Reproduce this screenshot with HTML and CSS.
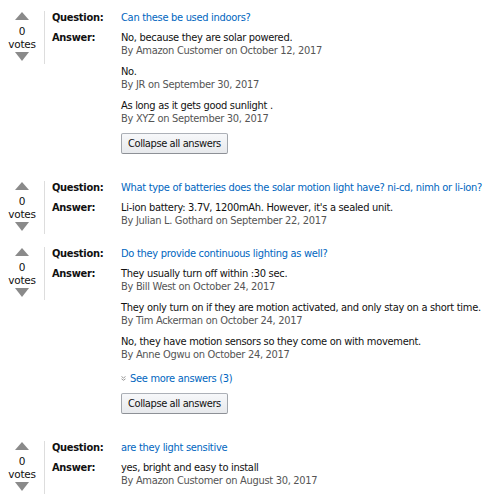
FILE: index.html
```html
<!DOCTYPE html>
<html lang="en">
<head>
    <meta charset="UTF-8">
    <meta name="viewport" content="width=device-width, initial-scale=1.0">
    <title>Customer Questions &amp; Answers</title>
    <link rel="stylesheet" href="styles.css">
</head>
<body>
    <div class="qa-list">
        <!-- Question 1 -->
        <div class="qa">
            <div class="vote">
                <span class="arrow up"></span>
                <span class="count first">0</span>
                <span class="count">votes</span>
                <span class="arrow down"></span>
            </div>
            <div class="qa-body">
                <div class="row">
                    <span class="label">Question:</span>
                    <a class="question" href="#">Can these be used indoors?</a>
                </div>
                <div class="row answers">
                    <span class="label">Answer:</span>
                    <div class="answer-list">
                        <div class="answer">
                            <p>No, because they are solar powered.</p>
                            <p class="byline">By Amazon Customer on October 12, 2017</p>
                        </div>
                        <div class="answer">
                            <p>No.</p>
                            <p class="byline">By JR on September 30, 2017</p>
                        </div>
                        <div class="answer">
                            <p>As long as it gets good sunlight .</p>
                            <p class="byline">By XYZ on September 30, 2017</p>
                        </div>
                        <button class="collapse">Collapse all answers</button>
                    </div>
                </div>
            </div>
        </div>

        <!-- Question 2 -->
        <div class="qa">
            <div class="vote">
                <span class="arrow up"></span>
                <span class="count first">0</span>
                <span class="count">votes</span>
                <span class="arrow down"></span>
            </div>
            <div class="qa-body">
                <div class="row">
                    <span class="label">Question:</span>
                    <a class="question" href="#">What type of batteries does the solar motion light have? ni-cd, nimh or li-ion?</a>
                </div>
                <div class="row answers">
                    <span class="label">Answer:</span>
                    <div class="answer-list">
                        <div class="answer">
                            <p>Li-ion battery: 3.7V, 1200mAh. However, it's a sealed unit.</p>
                            <p class="byline">By Julian L. Gothard on September 22, 2017</p>
                        </div>
                    </div>
                </div>
            </div>
        </div>

        <!-- Question 3 -->
        <div class="qa">
            <div class="vote">
                <span class="arrow up"></span>
                <span class="count first">0</span>
                <span class="count">votes</span>
                <span class="arrow down"></span>
            </div>
            <div class="qa-body">
                <div class="row">
                    <span class="label">Question:</span>
                    <a class="question" href="#">Do they provide continuous lighting as well?</a>
                </div>
                <div class="row answers">
                    <span class="label">Answer:</span>
                    <div class="answer-list">
                        <div class="answer">
                            <p>They usually turn off within :30 sec.</p>
                            <p class="byline">By Bill West on October 24, 2017</p>
                        </div>
                        <div class="answer">
                            <p>They only turn on if they are motion activated, and only stay on a short time.</p>
                            <p class="byline">By Tim Ackerman on October 24, 2017</p>
                        </div>
                        <div class="answer">
                            <p>No, they have motion sensors so they come on with movement.</p>
                            <p class="byline">By Anne Ogwu on October 24, 2017</p>
                        </div>
                        <a class="see-more" href="#"><svg class="chevron" width="5" height="5" viewBox="0 0 5 5"><path d="M0.5 0.5 L2.5 2 L4.5 0.5 M0.5 2.8 L2.5 4.3 L4.5 2.8" fill="none" stroke="#999" stroke-width="1"/></svg>See more answers (3)</a>
                        <button class="collapse">Collapse all answers</button>
                    </div>
                </div>
            </div>
        </div>

        <!-- Question 4 -->
        <div class="qa">
            <div class="vote">
                <span class="arrow up"></span>
                <span class="count first">0</span>
                <span class="count">votes</span>
                <span class="arrow down"></span>
            </div>
            <div class="qa-body">
                <div class="row">
                    <span class="label">Question:</span>
                    <a class="question" href="#">are they light sensitive</a>
                </div>
                <div class="row answers">
                    <span class="label">Answer:</span>
                    <div class="answer-list">
                        <div class="answer">
                            <p>yes, bright and easy to install</p>
                            <p class="byline">By Amazon Customer on August 30, 2017</p>
                        </div>
                    </div>
                </div>
            </div>
        </div>
    </div>
</body>
</html>
```

FILE: styles.css
```css
/* General Styles */
body {
    font-family: "DejaVu Sans Condensed", "DejaVu Sans", sans-serif;
    font-size: 11px;
    line-height: 13px;
    letter-spacing: -0.3px;
    color: #111;
    background: #fff;
    margin: 0;
    padding: 11px 0 0 0;
}

p {
    margin: 0;
}

a {
    color: #0066c0;
    text-decoration: none;
}

/* Question block */
.qa {
    display: flex;
    align-items: flex-start;
    margin-bottom: 27px;
}

.qa:nth-child(2) {
    margin-bottom: 13px;
}

.vote {
    width: 44px;
    height: 53px;
    border-right: 1px solid #ddd;
    display: flex;
    flex-direction: column;
    align-items: center;
    flex-shrink: 0;
}

.arrow {
    width: 0;
    height: 0;
    border-left: 7px solid transparent;
    border-right: 7px solid transparent;
}

.arrow.up {
    margin-top: 1px;
    border-bottom: 8px solid #8a8a8a;
}

.arrow.down {
    margin-top: 1px;
    border-top: 9px solid #8a8a8a;
}

.count {
    font-family: "DejaVu Sans", sans-serif;
    font-size: 10.5px;
    line-height: 13px;
    color: #111;
    letter-spacing: -0.2px;
}

.count.first {
    margin-top: 4px;
    line-height: 14px;
}

.qa-body {
    flex: 1;
    padding-left: 7px;
}

.row {
    display: flex;
}

.row.answers {
    margin-top: 7px;
}

.label {
    width: 69px;
    flex-shrink: 0;
    font-weight: bold;
}

.answer-list {
    flex: 1;
}

.answer + .answer {
    margin-top: 8px;
}

.byline {
    color: #555;
}

.see-more {
    display: block;
    margin-top: 11px;
}

.chevron {
    margin-right: 4px;
    vertical-align: 1px;
}

.collapse {
    display: block;
    margin-top: 8px;
    height: 21px;
    padding: 0 6px;
    font-family: inherit;
    font-size: 11px;
    letter-spacing: -0.4px;
    color: #111;
    background: linear-gradient(#f7f8fa, #e7e9ec);
    border: 1px solid #adb1b8;
    border-color: #adb1b8 #a2a6ac #8d9096;
    border-radius: 2px;
    cursor: pointer;
}
```
